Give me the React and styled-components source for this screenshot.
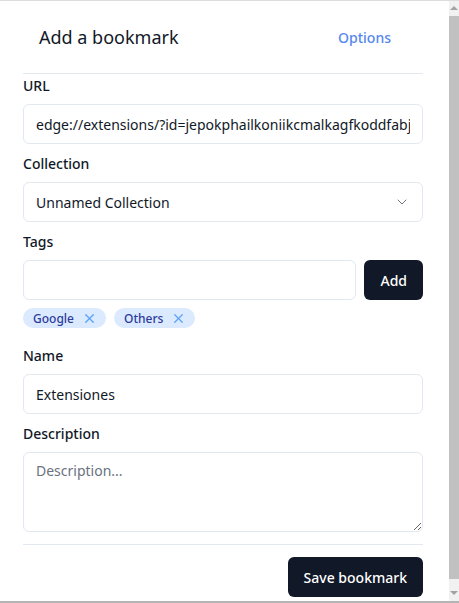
import styled, { createGlobalStyle } from "styled-components";
import { ChevronDown, X } from "lucide-react";

const GlobalStyle = createGlobalStyle`
    html, body {
        margin: 0;
        padding: 0;
        background: #ffffff;
    }
    body {
        font-family: "Noto Sans", "Open Sans", sans-serif;
        color: #111827;
    }
`;

const Window = styled.div`
    display: flex;
    width: 459px;
    height: 603px;
    box-sizing: border-box;
    border-top: 1px solid #dcdcdc;
    border-bottom: 2px solid #b4b4b4;
    overflow: hidden;
`;

const Page = styled.div`
    flex: 1;
    padding: 0 26px 0 23px;
    display: flex;
    flex-direction: column;
    & > * {
        flex-shrink: 0;
    }
`;

const Header = styled.div`
    display: flex;
    align-items: center;
    justify-content: space-between;
    height: 72px;
    padding: 0 16px;
    border-bottom: 1px solid #e2e8f0;
`;

const Title = styled.h1`
    margin: 0;
    font-size: 18px;
    font-weight: 400;
    color: #111827;
`;

const LinkButton = styled.button`
    border: 0;
    background: none;
    padding: 0 16px 0 0;
    margin: 0;
    font-family: inherit;
    font-size: 14px;
    font-weight: 500;
    color: #5587f0;
    cursor: pointer;
`;

const Form = styled.form`
    display: flex;
    flex-direction: column;
    margin: 0;
    padding-top: 2px;
`;

const Field = styled.div`
    display: flex;
    flex-direction: column;
    gap: 8px;
    margin-bottom: ${(p) => (p.$after === undefined ? 10 : p.$after)}px;
`;

const Label = styled.label`
    font-size: 14px;
    line-height: 20px;
    font-weight: 500;
    color: #111827;
`;

const Input = styled.input`
    box-sizing: border-box;
    width: 100%;
    height: 40px;
    margin: 0;
    padding: 0 12px;
    border: 1px solid #e2e8f0;
    border-radius: 6px;
    font-family: inherit;
    font-size: 14px;
    color: #111827;
    background: #ffffff;
    outline: none;
`;

const SelectBox = styled.div`
    box-sizing: border-box;
    display: flex;
    align-items: center;
    justify-content: space-between;
    height: 40px;
    padding: 0 12px;
    border: 1px solid #e2e8f0;
    border-radius: 6px;
    font-size: 14px;
    color: #111827;
    svg {
        color: #6b7280;
    }
`;

const Row = styled.div`
    display: flex;
    gap: 8px;
`;

const DarkButton = styled.button`
    flex: none;
    height: 40px;
    margin: 0;
    padding: 0 16px;
    border: 0;
    border-radius: 6px;
    background: #111827;
    color: #ffffff;
    font-family: inherit;
    font-size: 14px;
    font-weight: 500;
    cursor: pointer;
`;

const Chips = styled.div`
    display: flex;
    gap: 8px;
    margin-top: 8px;
`;

const Chip = styled.span`
    display: inline-flex;
    align-items: center;
    gap: 8px;
    height: 20px;
    padding: 0 9px 0 10px;
    border-radius: 10px;
    background: #dbeafe;
    color: #2b3a9b;
    font-size: 12px;
    font-weight: 500;
    svg {
        color: #60a5fa;
    }
`;

const TextArea = styled.textarea`
    display: block;
    box-sizing: border-box;
    width: 100%;
    height: 80px;
    margin: 0;
    padding: 8px 12px;
    border: 1px solid #e2e8f0;
    border-radius: 6px;
    font-family: inherit;
    font-size: 14px;
    color: #111827;
    outline: none;
    &::placeholder {
        color: #6b7280;
    }
`;

const Footer = styled.div`
    display: flex;
    justify-content: flex-end;
    margin-top: 12px;
    padding-top: 12px;
    border-top: 1px solid #e2e8f0;
`;

const Scrollbar = styled.div`
    flex: none;
    width: 10px;
    display: flex;
    flex-direction: column;
    align-items: center;
    background: #f1f1f1;
`;

const Arrow = styled.div`
    width: 0;
    height: 0;
    margin: ${(p) => (p.$down ? "4px 0 6px" : "5px 0 4px")};
    border-left: 4px solid transparent;
    border-right: 4px solid transparent;
    ${(p) => (p.$down ? "border-top: 4px solid #a3a3a3;" : "border-bottom: 4px solid #a3a3a3;")}
`;

const Thumb = styled.div`
    flex: 1;
    width: 10px;
    margin: 2px 0 8px;
    background: #c1c1c1;
`;

export default function App() {
    return (
        <Window>
            <GlobalStyle />
            <Page>
                <Header>
                    <Title>Add a bookmark</Title>
                    <LinkButton type="button">Options</LinkButton>
                </Header>
                <Form onSubmit={(e) => e.preventDefault()}>
                    <Field>
                        <Label>URL</Label>
                        <Input defaultValue="edge://extensions/?id=jepokphailkoniikcmalkagfkoddfabj" />
                    </Field>
                    <Field>
                        <Label>Collection</Label>
                        <SelectBox>
                            Unnamed Collection
                            <ChevronDown size={16} strokeWidth={1.5} />
                        </SelectBox>
                    </Field>
                    <Field $after={18}>
                        <Label>Tags</Label>
                        <div>
                            <Row>
                                <Input />
                                <DarkButton type="button">Add</DarkButton>
                            </Row>
                            <Chips>
                                <Chip>
                                    Google <X size={15} strokeWidth={2.2} />
                                </Chip>
                                <Chip>
                                    Others <X size={15} strokeWidth={2.2} />
                                </Chip>
                            </Chips>
                        </div>
                    </Field>
                    <Field>
                        <Label>Name</Label>
                        <Input defaultValue="Extensiones" />
                    </Field>
                    <Field $after={0}>
                        <Label>Description</Label>
                        <TextArea placeholder="Description..." />
                    </Field>
                    <Footer>
                        <DarkButton type="submit">Save bookmark</DarkButton>
                    </Footer>
                </Form>
            </Page>
            <Scrollbar>
                <Arrow />
                <Thumb />
                <Arrow $down />
            </Scrollbar>
        </Window>
    );
}
